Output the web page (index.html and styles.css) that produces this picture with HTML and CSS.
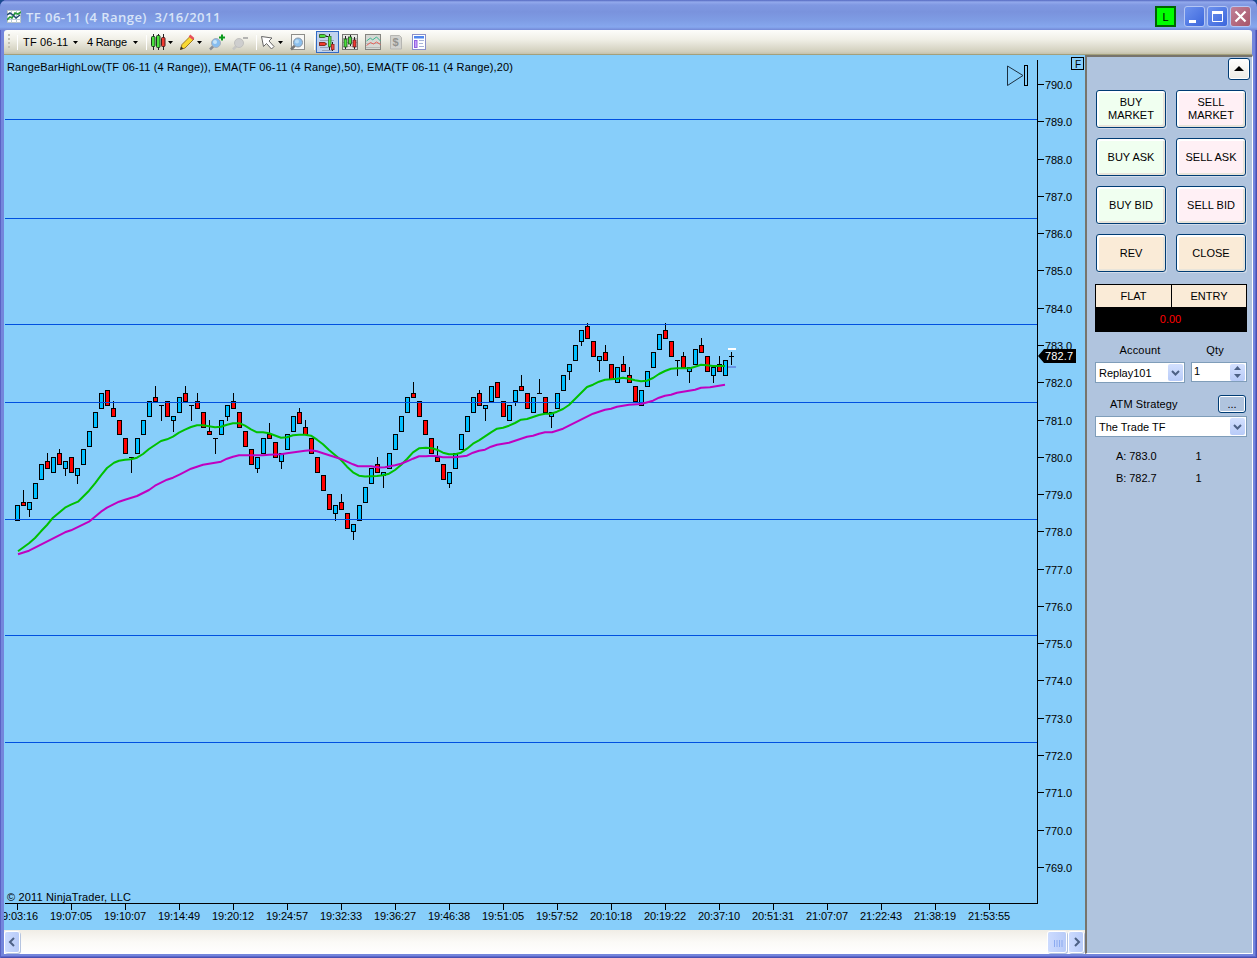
FILE: index.html
```
<!DOCTYPE html>
<html lang="en">
<head>
    <meta charset="UTF-8">
    <title>TF 06-11 (4 Range) 3/16/2011</title>
    <link rel="stylesheet" href="styles.css">
</head>
<body>
<div class="window">
    <!-- Title bar -->
    <div class="titlebar">
        <svg class="app-icon" width="14" height="14" viewBox="0 0 14 14">
            <rect x="0.5" y="0.5" width="13" height="12" fill="#fff" stroke="#b8c4c8"/>
            <path d="M0 4.5h14M0 9.5h14M4.5 0v13M9.5 0v13" stroke="#b9cdd8"/>
            <path d="M0 10l3-3 2 1 3-5 3 1 3-2" fill="none" stroke="#2a9a3a" stroke-width="1.6"/>
            <path d="M0 5l3-2 3 2 3 3 4-3" fill="none" stroke="#234a70" stroke-width="1.5"/>
        </svg>
        <span class="title">TF 06-11 (4 Range)&nbsp; 3/16/2011</span>
        <span class="link-badge">L</span>
        <div class="win-btn"><svg width="19" height="19"><rect x="4" y="13" width="7" height="3" fill="#fff"/></svg></div>
        <div class="win-btn"><svg width="19" height="19"><path d="M4.500 5v9.500h10V5" fill="none" stroke="#fff"/><rect x="4" y="4" width="11" height="3" fill="#fff"/></svg></div>
        <div class="win-btn win-close"><svg width="19" height="19"><path d="M4.500 4.500l10 10M14.500 4.500l-10 10" stroke="#fff" stroke-width="2.200"/></svg></div>
    </div>

    <!-- Toolbar -->
    <div class="toolbar">
        <svg width="440" height="24" viewBox="4 30 440 24">
            <g fill="#c3c0b2"><rect x="8" y="34" width="2" height="2"/><rect x="8" y="38" width="2" height="2"/><rect x="8" y="42" width="2" height="2"/><rect x="8" y="46" width="2" height="2"/></g>
            <path class="sep" d="M17.500 35v15M146.500 35v15M256.500 35v15M314.500 35v15"/>
            <text class="tool-text" x="23" y="46" textLength="45">TF 06-11</text>
            <text class="tool-text" x="87" y="46" textLength="40">4 Range</text>
            <path d="M73 41h5l-2.500 3zM133 41h5l-2.500 3zM168 41h5l-2.500 3zM197 41h5l-2.500 3zM278 41h5l-2.500 3z"/>
            <!-- bar style -->
            <path d="M153.500 34v16M158.500 34v16M163.500 34v16" stroke="#222"/>
            <rect x="151.500" y="36.500" width="3.500" height="10" rx="1" fill="#4be03c" stroke="#1c3a1c"/>
            <rect x="156.500" y="35.500" width="3.500" height="12" rx="1" fill="#4be03c" stroke="#1c3a1c"/>
            <rect x="161.500" y="37.500" width="3.500" height="9" rx="1" fill="#f03a30" stroke="#4a1c1c"/>
            <!-- pencil -->
            <path d="M180.500 49.500l1.500-5 8.500-8.500 3.500 3-9 9z" fill="#f9d932" stroke="#a07a20"/>
            <path d="M189.500 35.500l4 3.500" stroke="#e8505a" stroke-width="2.500"/>
            <path d="M180 50l1-3.500 2.500 2z" fill="#333"/>
            <!-- zoom in / out -->
            <path d="M210 49.500l4-4" stroke="#8a8e96" stroke-width="2.500"/>
            <circle cx="216" cy="43" r="4.500" fill="#86bdf0" stroke="#a8b0ba"/><circle cx="215" cy="42" r="2" fill="#c8e4fa"/>
            <path d="M219 37.500h6M222 34.500v6" stroke="#0c9a1c" stroke-width="2"/>
            <path d="M233 49.500l4-4" stroke="#c6c6c4" stroke-width="2.500"/>
            <circle cx="239" cy="43" r="4.500" fill="#cecece" stroke="#c0c0be"/>
            <path d="M243 38h5" stroke="#b4b4b2" stroke-width="2"/>
            <!-- cursor -->
            <path d="M261.500 36.500l10.500 1.500-3 3 5 5.500-2.500 2.500-5-5.500-3 3z" fill="#fff" stroke="#666"/>
            <!-- zoom frame -->
            <rect x="291.500" y="34.500" width="13" height="15" fill="#f8f8f6" stroke="#8e8e8a"/>
            <path d="M291 49.500l4-4" stroke="#777" stroke-width="2.500"/>
            <circle cx="298" cy="42.500" r="4.500" fill="#8cc0ee" stroke="#8a96a4"/><circle cx="297" cy="41.500" r="2" fill="#b8dcf8"/>
            <!-- chart trader, selected -->
            <rect x="316.500" y="31.500" width="22" height="21" fill="#c1d2ee" stroke="#316ac5"/>
            <path d="M320 40.500h14M320 47.500h14M322 50.500h10" stroke="#98a4b8"/>
            <path d="M319.500 34.500h5l2 1.500-2 1.500h-5zM319.500 42.500h5l2 1.500-2 1.500h-5z" fill="#4be03c" stroke="#3a6a30"/>
            <path d="M319.500 42.500h5l2 1.500-2 1.500h-5z" fill="#f03a30" stroke="#8a2a20"/>
            <path d="M326 36.500h4" stroke="#222"/>
            <path d="M329.500 34v16M332.500 42v9" stroke="#222"/>
            <rect x="328.500" y="36.500" width="2.500" height="10" fill="#5be84c" stroke="#3a8a30"/>
            <rect x="331.500" y="44.500" width="2.500" height="5" fill="#f04a40" stroke="#a03028"/>
            <!-- data box -->
            <rect x="342.500" y="34.500" width="15" height="15" fill="#e8e8e4" stroke="#777773"/>
            <path d="M343 38.500h14M343 42.500h14M343 46.500h14" stroke="#b8b8b4"/>
            <path d="M345.500 36v13M350.500 35v11M354.500 37v12" stroke="#222"/>
            <rect x="344" y="39" width="3" height="8" fill="#4be03c" stroke="#234a20" stroke-width=".8"/>
            <rect x="348.500" y="37" width="3" height="7" fill="#4be03c" stroke="#234a20" stroke-width=".8"/>
            <rect x="353" y="40" width="3" height="7" fill="#f03a30" stroke="#5a2020" stroke-width=".8"/>
            <!-- indicators -->
            <rect x="365.500" y="34.500" width="15" height="15" fill="#d6d8d4" stroke="#858580"/>
            <path d="M366 43.500h14M366 47.500h14" stroke="#b8bab6"/>
            <path d="M366.500 41l4-3 2 2 4-3 4 4" fill="none" stroke="#3ab890"/>
            <path d="M366.500 45.500l4-3 3 1.500 3-2 4 2.500" fill="none" stroke="#e86058"/>
            <!-- strategies -->
            <path d="M390.500 35.500h9l2 2v11.500h-11z" fill="#d2d2ce" stroke="#b6b6b2"/>
            <text x="392.500" y="46" font-size="11" font-weight="bold" fill="#92928e">$</text>
            <!-- properties -->
            <rect x="412.500" y="34.500" width="13" height="15" fill="#fff" stroke="#8a90c8"/>
            <rect x="414" y="36" width="10" height="2.500" fill="#4f86ee"/>
            <rect x="414.500" y="40.500" width="2.500" height="7" fill="#c8a0f8" stroke="#9060e0"/>
            <path d="M419 40.500h5M419 43.500h4M419 46.500h5" stroke="#a8b4d8"/>
        </svg>
    </div>

    <div class="content">
        <div class="chart-pane">
            <svg id="chart" width="1081" height="875" viewBox="4 55 1081 875">
                <g id="candles"></g>
                <g class="levels">
                    <path d="M5 119.500H1037M5 218.500H1037M5 324.500H1037M5 402.500H1037M5 519.500H1037M5 635.500H1037M5 742.500H1037"/>
                </g>
                <path d="M728 349h8" stroke="#fff" stroke-width="2"/>
                <path d="M728 367h8" stroke="#6a94e6" stroke-width="2"/>
                <polyline class="ema ema20" points="18,551.3 29,543.3 35,538 41,531.3 47,525 53,517.7 65,507.7 71,504.7 78,501.7 83,496.7 89,490.7 95,483.3 101,475.3 107,468 114,462.7 119,460.7 125,459.7 131,459.3 137,457.7 143,454 149,449 161,441 167,439.3 173,436.7 179,432.7 185,429.7 191,427 197,425.3 203,425.3 215,427.3 221,426.7 227,424.7 233,423.3 240,423.3 245,425.7 251,429.3 257,432.3 263,432.3 269,433.3 281,437.7 287,437.3 293,435.3 299,434.7 305,434.7 311,435.7 317,439.7 323,444.3 329,450 341,460 347,466.7 353,472.3 359,475.7 365,476.5 371,476.3 377,476 383,475.3 389,473.7 395,470 401,465 407,459 413,452.3 419,448.3 426,447.7 432,448.3 437,449.7 443,452.7 449,454.3 455,454.3 461,452.7 467,448.7 473,443.7 479,440.3 485,436.3 491,432.3 497,428.7 503,427.7 509,425.7 515,423 521,419.7 527,419 533,417 539,415 545,413.7 551,413.7 557,411.7 563,409 569,405 575,399 587,387 593,384.7 599,381.7 605,379.7 611,379.3 617,378.7 623,377.7 629,378.7 635,380.3 641,381.3 647,380.7 653,378 659,374 665,371 671,368.7 677,368.3 690,368.3 695,366.7 701,364.7 707,365.3 713,366 725,366"/>
                <polyline class="ema ema50" points="18,554.3 29,550.7 35,547.7 65,532.3 71,530.3 89,521.7 95,516.7 101,511.7 107,507.7 113,504.7 119,501.7 125,499.7 137,496 149,490 155,485.7 167,479.7 173,477.7 180,474.3 191,468.7 203,464.7 209,463.7 221,461.7 227,458.7 233,456.7 239,455.3 263,455.3 269,454.7 281,454.3 287,453.3 305,450.7 311,450.3 317,451.3 323,453.3 341,459 347,461.7 353,464.3 358,466.3 371,466.3 379,467.5 385,467.3 395,465.3 401,463.7 407,461.3 413,458.7 419,456.3 426,456.3 432,455.7 437,456.3 443,457.3 455,457.3 467,455.7 473,452.7 479,450.7 485,449.7 491,446.7 497,444.7 509,442.7 527,436.7 533,435.7 539,433.7 545,432.3 552,432.3 563,428.7 569,425.7 593,413.7 605,409.7 611,408.7 617,406.7 629,404.7 641,404 653,400.7 659,397.7 665,395.7 671,394.7 677,392.7 695,389.7 701,387.7 710,387.3 725,384.7"/>
                <path class="axis" d="M1037.500 60V903.500H5"/>
                <g id="scale"></g>
                <text x="7" y="71" textLength="506">RangeBarHighLow(TF 06-11 (4 Range)), EMA(TF 06-11 (4 Range),50), EMA(TF 06-11 (4 Range),20)</text>
                <text x="7" y="901" textLength="124">© 2011 NinjaTrader, LLC</text>
                <path d="M1007.500 66v19.500L1023 75.500z" fill="none" stroke="#1c3040"/>
                <rect x="1024.500" y="65.500" width="3" height="20" fill="none" stroke="#000"/>
                <rect x="1071.500" y="57.500" width="12" height="12" fill="none" stroke="#000"/>
                <text x="1075" y="68" font-size="10">F</text>
                <path d="M1038 356l6-7h32v14h-32z"/>
                <text class="last-price" x="1045" y="360" textLength="28">782.7</text>
            </svg>
            <div class="scrollbar">
                <div class="scroll-btn"><svg width="15" height="20"><path d="M9 6l-4 4 4 4" fill="none" stroke="#4d6185" stroke-width="2"/></svg></div>
                <div class="scroll-btn thumb"><svg width="19" height="20"><path d="M6.500 8v7M9 8v7M11.500 8v7M14 8v7" stroke="#8cabf0"/></svg></div>
                <div class="scroll-btn"><svg width="15" height="20"><path d="M6 6l4 4-4 4" fill="none" stroke="#4d6185" stroke-width="2"/></svg></div>
            </div>
        </div>

        <!-- Chart trader -->
        <div class="trader">
            <div class="collapse-row"><button class="collapse"><svg width="10" height="5"><path d="M0 5l5-5 5 5z"/></svg></button></div>
            <div class="orders">
                <button class="order buy">BUY<br>MARKET</button>
                <button class="order sell">SELL<br>MARKET</button>
                <button class="order buy">BUY ASK</button>
                <button class="order sell">SELL ASK</button>
                <button class="order buy">BUY BID</button>
                <button class="order sell">SELL BID</button>
                <button class="order neutral">REV</button>
                <button class="order neutral">CLOSE</button>
            </div>
            <div class="position">
                <div class="cell">FLAT</div>
                <div class="cell">ENTRY</div>
                <div class="pnl">0.00</div>
            </div>
            <div class="labels"><span class="label-account">Account</span><span class="label-qty">Qty</span></div>
            <div class="fields">
                <div class="select account"><span>Replay101</span><i class="drop"><svg width="9" height="6"><path d="M1 1l3.500 3.500L8 1" fill="none" stroke="#4d6185" stroke-width="2"/></svg></i></div>
                <div class="select qty"><span>1</span><i class="drop spin"><svg width="7" height="12"><path d="M0 4l3.500-4L7 4zM0 8l3.500 4L7 8z" fill="#4d6185"/></svg></i></div>
            </div>
            <div class="atm"><span>ATM Strategy</span><button class="more">...</button></div>
            <div class="select strategy"><span>The Trade TF</span><i class="drop"><svg width="9" height="6"><path d="M1 1l3.500 3.500L8 1" fill="none" stroke="#4d6185" stroke-width="2"/></svg></i></div>
            <div class="quote"><span>A: 783.0</span><span>1</span></div>
            <div class="quote"><span>B: 782.7</span><span>1</span></div>
        </div>
    </div>
</div>
<script src="chart.js"></script>
</body>
</html>
```
FILE: styles.css
```
* {
    box-sizing: border-box;
}
body {
    margin: 0;
    width: 1257px;
    height: 958px;
    overflow: hidden;
    background: #1b4b90;
    font-family: "Liberation Sans", Arial, sans-serif;
    font-size: 11px;
    color: #000;
}
svg {
    display: block;
}
button {
    font: inherit;
    color: #000;
    padding: 0;
}
.window {
    display: flex;
    flex-direction: column;
    height: 958px;
    padding: 0 5px 4px 4px;
    background: #7486dc;
    border-radius: 7px 7px 0 0;
    box-shadow: inset 1px 0 #5a62c4, inset -1px -1px #4a50b0, inset -2px -2px #5c68cc;
}
/* Title bar */
.titlebar {
    display: flex;
    align-items: center;
    height: 30px;
    margin: 0 -5px 0 -4px;
    padding: 3px 6px 0 7px;
    border-radius: 7px 7px 0 0;
    background: linear-gradient(#5468c0 0, #93a9ec 2px, #7f98e2 5px, #7a93dd 12px, #7e9ce4 20px, #86a7ee 27px, #7388d6 30px);
}
.title {
    flex: 1;
    margin-left: 5px;
    font: 600 13px "Open Sans", "Noto Sans", sans-serif;
    letter-spacing: 0.45px;
    color: #d8e4f8;
}
.link-badge {
    width: 21px;
    height: 21px;
    margin-right: 6px;
    border: 2px solid #006400;
    background: #0f0;
    line-height: 18px;
    text-align: center;
}
.win-btn {
    width: 21px;
    height: 21px;
    margin-left: 2px;
    border: 1px solid #b4c6f4;
    border-radius: 3px;
    background: linear-gradient(135deg, #6d92ee, #3b66dc);
}
.win-close {
    background: linear-gradient(135deg, #c08098, #a85568);
}
/* Toolbar */
.toolbar {
    height: 25px;
    background: linear-gradient(#fdfdfb, #f0efe6 40%, #d2cfbd 90%, #c4c1ab);
    border-bottom: 1px solid #a3a07c;
    border-radius: 3px 3px 0 0;
}
.tool-text {
    font-size: 11px;
}
.sep {
    stroke: #fff;
}
/* Chart */
.content {
    display: flex;
    flex: 1;
    min-height: 0;
}
.chart-pane {
    width: 1081px;
}
#chart {
    background: #87cefa;
    font-size: 11px;
}
.levels path {
    fill: none;
    stroke: #0050e0;
    shape-rendering: crispEdges;
}
.axis, .tick {
    fill: none;
    stroke: #000;
    shape-rendering: crispEdges;
}
.candle {
    stroke: #000;
    shape-rendering: crispEdges;
}
.up {
    fill: #00bfff;
}
.down {
    fill: #f00;
}
.ema {
    fill: none;
    stroke-width: 2;
    stroke-linejoin: round;
}
.ema20 {
    stroke: #00c000;
}
.ema50 {
    stroke: #c000c0;
}
.last-price {
    fill: #fff;
}
/* Scrollbar */
.scrollbar {
    display: flex;
    align-items: center;
    height: 24px;
    padding: 0 2px 1px 1px;
    background: linear-gradient(#f0ede6, #fbfaf7 50%, #fff);
}
.scroll-btn {
    height: 20px;
    width: 14px;
    border-radius: 2px;
    background: linear-gradient(90deg, #ccdbff, #b8cbf8);
    box-shadow: 0 0 0 1px #fff, 1px 1px 0 1px #b5c4e0;
}
.thumb {
    width: 18px;
    margin-left: auto;
    margin-right: 3px;
}
/* Chart trader */
.trader {
    flex: 1;
    padding: 1px 5px 0 8px;
    background: #b0c4de;
    border-left: 2px solid #77746c;
    border-top: 2px solid #77746c;
    border-right: 1px solid #fff;
    border-bottom: 1px solid #fff;
}
.collapse-row {
    display: flex;
    justify-content: flex-end;
    height: 32px;
    margin-right: -3px;
}
.collapse {
    display: flex;
    align-items: center;
    justify-content: center;
    width: 22px;
    height: 22px;
    border: 1px solid #003c74;
    border-radius: 3px;
    background: linear-gradient(#fff, #ecebe5);
    box-shadow: inset 0 0 0 1px #fff;
}
.collapse svg {
    margin-bottom: 2px;
}
.orders {
    display: grid;
    grid-template-columns: 70px 70px;
    gap: 10px;
    padding-left: 1px;
}
.order {
    height: 38px;
    border: 1px solid #003c74;
    border-radius: 3px;
    line-height: 13px;
    box-shadow: inset 2px 2px #fff, inset -2px -2px #e8e4da, 1px 1px #d2dcea;
}
.buy {
    background: #f0fff0;
}
.sell {
    background: #fff0f5;
}
.neutral {
    background: #faebd7;
}
.position {
    display: grid;
    grid-template-columns: 75px 75px;
    column-gap: 1px;
    width: 152px;
    height: 48px;
    margin-top: 12px;
    padding: 1px 0 0 1px;
    background: #000;
}
.cell {
    height: 22px;
    line-height: 22px;
    background: #faebd7;
    text-align: center;
}
.cell + .cell {
    width: 74px;
}
.pnl {
    grid-column: 1 / 3;
    padding-right: 2px;
    line-height: 25px;
    color: #f00;
    text-align: center;
}
.labels {
    display: flex;
    height: 30px;
    padding-top: 12px;
    letter-spacing: 0.2px;
}
.label-account {
    width: 90px;
    text-align: center;
}
.label-qty {
    width: 60px;
    text-align: center;
}
.fields {
    display: flex;
    gap: 6px;
}
.select {
    display: flex;
    align-items: center;
    justify-content: space-between;
    height: 21px;
    padding: 0 1px 0 3px;
    border: 1px solid #7f9db9;
    background: #fff;
}
.account {
    width: 90px;
}
.qty {
    width: 56px;
    height: 20px;
    padding-left: 2px;
}
.qty span {
    margin-bottom: 3px;
}
.drop {
    display: flex;
    align-items: center;
    justify-content: center;
    width: 15px;
    height: 17px;
    border-radius: 2px;
    background: linear-gradient(#d3e0fe, #b8cbf8);
}
.atm {
    display: flex;
    align-items: center;
    justify-content: space-between;
    height: 33px;
    padding: 10px 1px 1px 15px;
    letter-spacing: 0.1px;
}
.more {
    width: 28px;
    height: 18px;
    border: 1px solid #003c74;
    border-radius: 3px;
    background: #b0c4de;
    box-shadow: inset 0 0 0 1px #fff;
    line-height: 12px;
}
.strategy {
    width: 152px;
}
.quote {
    display: flex;
    gap: 39px;
    height: 22px;
    padding-left: 21px;
    line-height: 22px;
    letter-spacing: -0.05px;
}
.strategy + .quote {
    margin-top: 8px;
}
```
FILE: chart.js
```
// each bar: [open, close, low, high]; tenths of a point above 770, high defaults to low + 4
const bars = [
    [83,87,83],[88,87,87],[86,88,84],[89,93,89],[94,98,94],[99,97,97],[96,100,96],[101,98,98],[97,99,95],[100,96,96],
    [95,97,93],[98,102,98],[103,107,103],[108,112,108],[113,117,113],[118,114,114],[113,111,111],[110,106,106],[105,101,101],[100,100,96],
    [101,105,101],[106,110,106],[111,115,111],[116,115,115],[114,114,110],[115,111,111],[110,111,107],[112,116,112],[117,115,115],[114,114,110],
    [115,113,113],[112,108,108],[107,106,106],[105,105,101],[106,110,106],[111,114,110],[115,113,113],[112,108,108],[107,103,103],[102,98,98],
    [97,100,96],[101,105,101],[106,105,105],[104,100,100],[99,101,97],[102,106,102],[107,111,107],[112,109,109],[108,106,106],[105,101,101],
    [100,96,96],[95,91,91],[90,86,86],[85,87,83],[88,86,86],[85,81,81],[80,82,78],[83,87,83],[88,92,88],[93,97,93],
    [98,96,96],[95,96,92],[97,101,97],[102,106,102],[107,111,107],[112,116,112],[117,116,116],[115,111,111],[110,106,106],[105,101,101],
    [100,99,99],[98,94,94],[93,96,92],[97,101,97],[102,106,102],[107,111,107],[112,116,112],[117,114,114],[113,114,110],[115,119,115],
    [120,116,116],[115,111,111],[110,114,110],[115,118,114],[119,118,118],[117,113,113],[112,116,112],[117,117,117],[116,112,112],[111,112,108],
    [113,117,113],[118,122,118],[123,125,121],[126,130,126],[131,134,130],[135,132,132],[131,127,127],[126,127,123],[128,126,126],[125,121,121],
    [120,124,120],[125,123,123],[122,120,120],[119,115,115],[114,118,114],[119,123,119],[124,128,124],[129,133,129],[134,132,132],[131,127,127],
    [126,126,122],[127,124,124],[123,124,120],[125,129,125],[130,128,128],[127,123,123],[122,124,120],[125,123,123],[122,126,122],[127,127,125,128]
];
const times = ['19:03:16', '19:07:05', '19:10:07', '19:14:49', '19:20:12', '19:24:57', '19:32:33', '19:36:27', '19:46:38', '19:51:05',
    '19:57:52', '20:10:18', '20:19:22', '20:37:10', '20:51:31', '21:07:07', '21:22:43', '21:38:19', '21:53:55'];

const y = t => Math.round(829.6 - 3.728 * t) + 0.5;

let out = '';
bars.forEach(([open, close, low, high = low + 4], i) => {
    const x = 17.5 + i * 6;
    out += `<path class="candle" d="M${x} ${y(high) - 0.5}V${y(low) + 0.5}"/>`;
    if (open === close) {
        out += `<path class="candle" d="M${x - 2.5} ${y(open)}h5"/>`;
    } else {
        const top = y(Math.max(open, close));
        const bottom = y(Math.min(open, close));
        out += `<rect class="candle ${close > open ? 'up' : 'down'}" x="${x - 2}" y="${top}" width="4" height="${bottom - top}"/>`;
    }
});
document.getElementById('candles').innerHTML = out;

let scale = '';
for (let p = 769; p <= 790; p++) {
    const py = y((p - 770) * 10);
    scale += `<path class="tick" d="M1038 ${py}h6"/><text x="1045" y="${py + 4}" textLength="27">${p}.0</text>`;
}
times.forEach((t, i) => {
    const x = 17.5 + i * 54;
    scale += `<path class="tick" d="M${x} 904v6"/><text x="${x - 21.5}" y="920" textLength="42">${t}</text>`;
});
document.getElementById('scale').innerHTML = scale;
```
